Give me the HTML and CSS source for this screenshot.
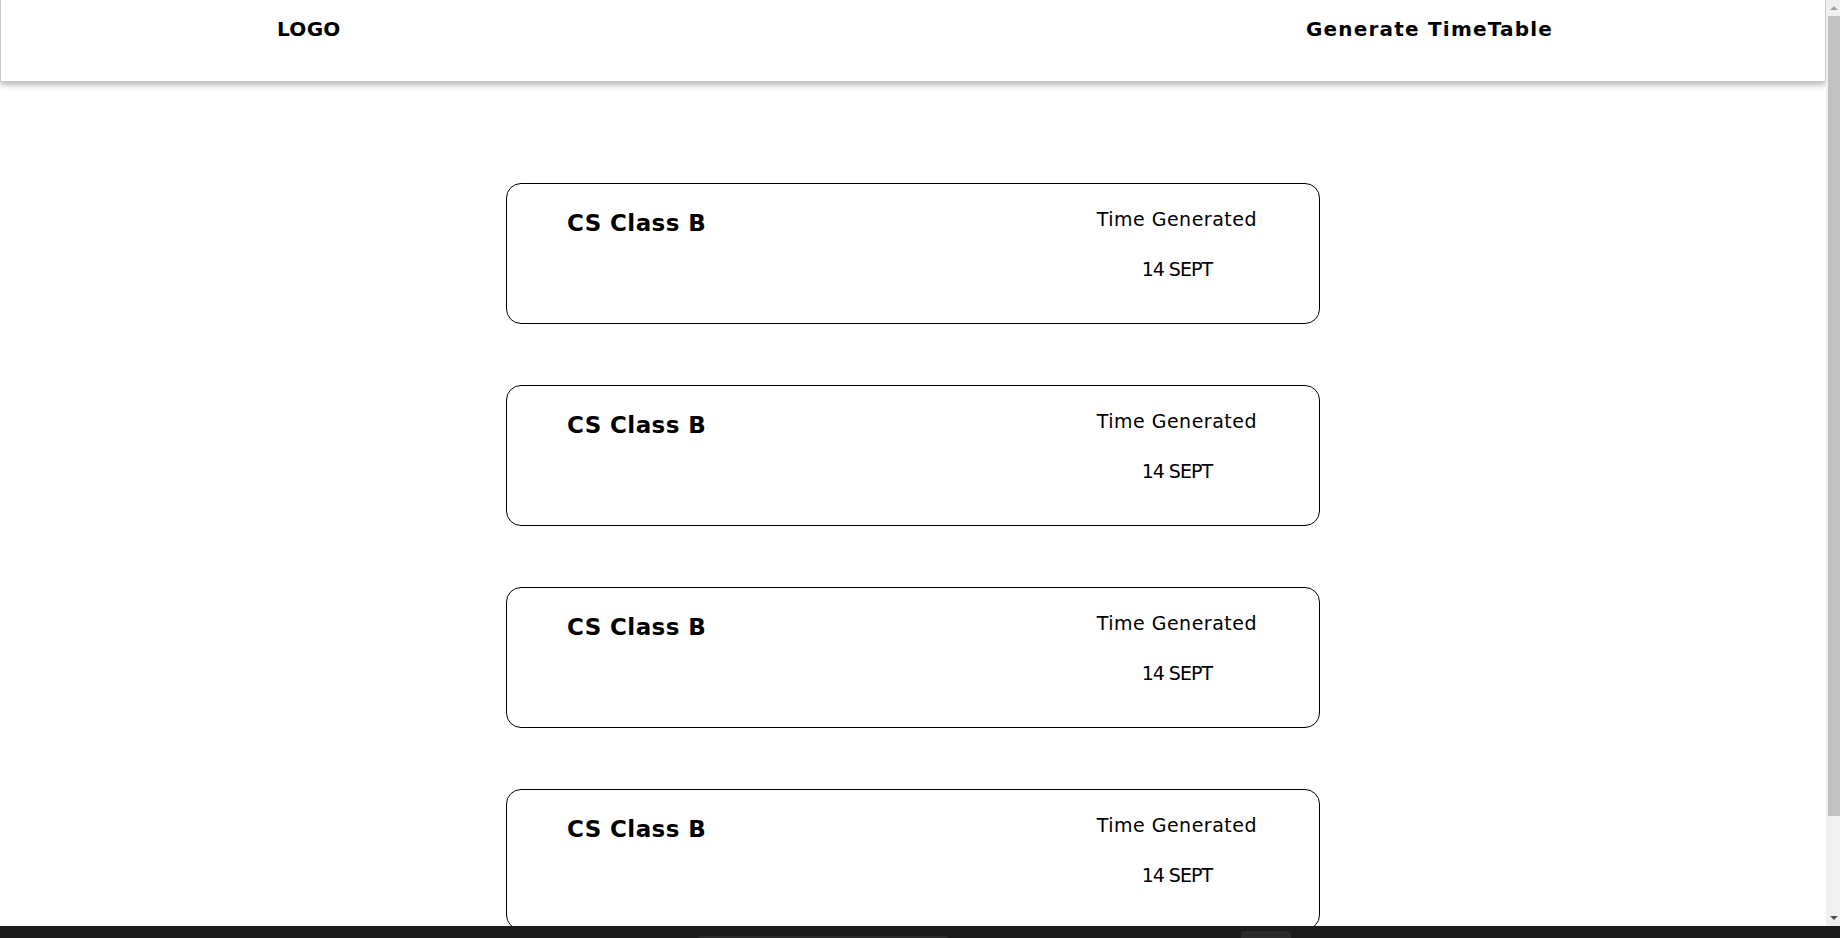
FILE: index.html
```html
<!DOCTYPE html>
<html lang="en">
<head>
<meta charset="utf-8">
<title>TimeTables</title>
<link rel="stylesheet" href="styles.css">
</head>
<body>
<div class="page">
  <header class="topbar">
    <div class="logo">LOGO</div>
    <div class="nav-link">Generate TimeTable</div>
  </header>
  <main class="list">
    <section class="card">
      <h2 class="card-title">CS Class B</h2>
      <div class="card-meta">
        <p class="meta-label">Time Generated</p>
        <p class="meta-date">14 SEPT</p>
      </div>
    </section>
    <section class="card">
      <h2 class="card-title">CS Class B</h2>
      <div class="card-meta">
        <p class="meta-label">Time Generated</p>
        <p class="meta-date">14 SEPT</p>
      </div>
    </section>
    <section class="card">
      <h2 class="card-title">CS Class B</h2>
      <div class="card-meta">
        <p class="meta-label">Time Generated</p>
        <p class="meta-date">14 SEPT</p>
      </div>
    </section>
    <section class="card">
      <h2 class="card-title">CS Class B</h2>
      <div class="card-meta">
        <p class="meta-label">Time Generated</p>
        <p class="meta-date">14 SEPT</p>
      </div>
    </section>
  </main>
</div>
<div class="scrollbar">
  <span class="arrow arrow-up"></span>
  <span class="thumb"></span>
  <span class="arrow arrow-down"></span>
</div>
<div class="taskbar">
  <span class="task task-a"></span>
  <span class="task task-b"></span>
</div>
</body>
</html>
```
FILE: styles.css
```css
html, body {
  margin: 0;
  padding: 0;
  background: #ffffff;
  overflow: hidden;
}
body {
  font-family: "DejaVu Sans", "Liberation Sans", sans-serif;
  color: #000;
}
.page {
  margin-right: 14px;
}
.topbar {
  height: 82px;
  box-sizing: border-box;
  display: flex;
  justify-content: space-between;
  align-items: flex-start;
  padding: 17px 272px 0 276px;
  border: 1px solid #c8c8c8;
  border-top: none;
  box-shadow: 0 3px 6px rgba(0, 0, 0, 0.28);
  background: #fff;
}
.logo, .nav-link {
  font-size: 20px;
  font-weight: 700;
}
.logo {
  letter-spacing: 0.3px;
}
.nav-link {
  letter-spacing: 1.2px;
}
.list {
  display: flex;
  flex-direction: column;
  align-items: center;
  gap: 61px;
  padding: 101px 0 105px;
}
.card {
  width: 814px;
  height: 141px;
  box-sizing: border-box;
  border: 1px solid #000;
  border-radius: 15px;
  display: flex;
  justify-content: space-between;
  align-items: flex-start;
  padding: 24px 62px 0 60px;
}
.card-title {
  margin: 2px 0 0;
  font-size: 23px;
  font-weight: 700;
  letter-spacing: 0.4px;
}
.card-meta {
  text-align: center;
}
.meta-label, .meta-date {
  margin: 0;
  font-size: 19px;
  font-weight: 400;
}
.meta-label {
  letter-spacing: 0.5px;
}
.meta-date {
  margin-top: 28px;
  letter-spacing: -1px;
}
.scrollbar {
  position: fixed;
  top: 0;
  right: 0;
  bottom: 12px;
  width: 14px;
  background: #f0f0f0;
  display: flex;
  flex-direction: column;
  align-items: flex-end;
}
.thumb {
  width: 12px;
  height: 800px;
  background: #c1c1c1;
}
.arrow {
  width: 12px;
  height: 16px;
  display: flex;
  justify-content: center;
  align-items: center;
}
.arrow-up::before {
  content: "";
  border-left: 4px solid transparent;
  border-right: 4px solid transparent;
  border-bottom: 4px solid #a3a3a3;
}
.arrow-down {
  margin-top: auto;
}
.arrow-down::before {
  content: "";
  border-left: 4px solid transparent;
  border-right: 4px solid transparent;
  border-top: 4px solid #505050;
}
.taskbar {
  position: fixed;
  left: 0;
  right: 0;
  bottom: 0;
  height: 12px;
  background: #1c1c1c;
}
.task {
  position: absolute;
  background: #2c2c2c;
  border-radius: 3px 3px 0 0;
}
.task-a {
  left: 698px;
  width: 250px;
  top: 10px;
  height: 4px;
}
.task-b {
  left: 1241px;
  width: 50px;
  top: 5px;
  height: 10px;
}
```
